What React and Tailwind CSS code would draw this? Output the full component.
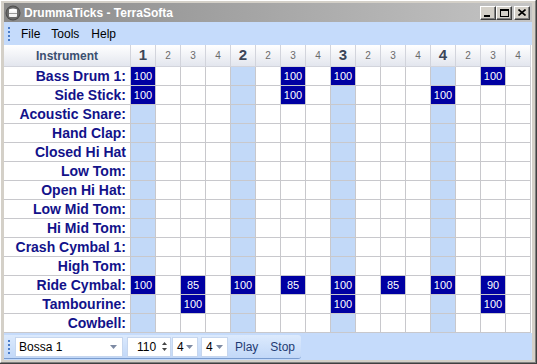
import React from "react";

const rows = [
  ["Bass Drum 1:", { 0: 100, 6: 100, 8: 100, 14: 100 }],
  ["Side Stick:", { 0: 100, 6: 100, 12: 100 }],
  ["Acoustic Snare:", {}],
  ["Hand Clap:", {}],
  ["Closed Hi Hat", {}],
  ["Low Tom:", {}],
  ["Open Hi Hat:", {}],
  ["Low Mid Tom:", {}],
  ["Hi Mid Tom:", {}],
  ["Crash Cymbal 1:", {}],
  ["High Tom:", {}],
  ["Ride Cymbal:", { 0: 100, 2: 85, 4: 100, 6: 85, 8: 100, 10: 85, 12: 100, 14: 90 }],
  ["Tambourine:", { 2: 100, 8: 100, 14: 100 }],
  ["Cowbell:", {}],
];

const cols = Array.from({ length: 16 }, (_, i) => i);

function Grip({ className }) {
  return (
    <div className={"flex flex-col gap-[2px] " + className}>
      {[0, 1, 2, 3].map((i) => (
        <div key={i} className="w-[2px] h-[2px] bg-[#4a7cc8]" />
      ))}
    </div>
  );
}

function Arrow() {
  return (
    <svg width="7" height="4" viewBox="0 0 7 4">
      <path d="M0 0 L7 0 L3.5 4 Z" fill="#7d8aa3" />
    </svg>
  );
}

function WinBtn({ children }) {
  return (
    <div className="w-[16px] h-[14px] bg-[#d4d0c8] border-t border-l border-t-white border-l-white border-r border-b border-r-[#404040] border-b-[#404040] flex items-center justify-center shadow-[inset_-1px_-1px_0_#808080]">
      {children}
    </div>
  );
}

export default function App() {
  return (
    <div
      className="w-[537px] h-[364px] bg-[#d4d0c8] flex flex-col border-r border-b border-r-[#404040] border-b-[#404040] overflow-hidden"
      style={{ fontFamily: '"Liberation Sans", Arial, sans-serif' }}
    >
      <div className="flex-1 flex flex-col border-t border-l border-t-white border-l-white border-r border-b border-r-[#808080] border-b-[#808080] pt-[2px] pl-[3px] pr-[3px] pb-[2px] min-h-0">
        {/* Title bar */}
        <div className="h-[19px] shrink-0 flex items-center bg-gradient-to-r from-[#8a8a8a] to-[#c4c4c4] pl-[1px] pr-[2px]">
          <svg width="16" height="16" viewBox="0 0 16 16" className="mr-[3px]">
            <circle cx="8" cy="8" r="7.5" fill="#4e4e4e" />
            <circle cx="8" cy="8" r="6.5" fill="#6a6a6a" />
            <rect x="4" y="5" width="8" height="7" rx="1" fill="#f4f4f4" />
            <ellipse cx="8" cy="5" rx="4" ry="1.5" fill="#ffffff" />
            <rect x="4" y="8" width="8" height="1" fill="#9a9a9a" />
          </svg>
          <span className="text-white font-bold text-[12px] leading-none">
            DrummaTicks - TerraSofta
          </span>
          <div className="ml-auto flex items-center">
            <WinBtn>
              <div className="w-[6px] h-[2px] bg-black mt-[6px] -ml-[2px]" />
            </WinBtn>
            <WinBtn>
              <div className="w-[9px] h-[8px] border border-black border-t-2" />
            </WinBtn>
            <div className="w-[2px]" />
            <WinBtn>
              <svg width="8" height="7" viewBox="0 0 8 7">
                <path d="M0.5 0.5 L7.5 6.5 M7.5 0.5 L0.5 6.5" stroke="black" strokeWidth="1.6" />
              </svg>
            </WinBtn>
          </div>
        </div>

        {/* Client */}
        <div className="flex-1 flex flex-col bg-[#c5dbfb] min-h-0">
          {/* Menu */}
          <div className="h-[23px] shrink-0 flex items-center bg-[#c5dbfb] text-[12px] text-black">
            <Grip className="ml-[4px] mr-[6px]" />
            <span className="px-[5px]">File</span>
            <span className="px-[5px] ml-[1px]">Tools</span>
            <span className="px-[5px] ml-[2px]">Help</span>
          </div>

          {/* Grid */}
          <div className="bg-white flex-1 min-h-0">
            <div className="grid grid-cols-[127px_repeat(16,25px)] grid-rows-[22px_repeat(14,19px)]">
              <div className="bg-gradient-to-b from-white to-[#e3e6ee] border-r border-b border-[#d2d4dc] flex items-center justify-center text-[12px] font-bold text-[#3b4f70]">
                Instrument
              </div>
              {cols.map((c) => {
                const beat = c % 4 === 0;
                return (
                  <div
                    key={"h" + c}
                    className="bg-gradient-to-b from-white to-[#e3e6ee] border-r border-b border-[#d2d4dc] flex items-center justify-center"
                  >
                    {beat ? (
                      <span className="text-[15px] font-bold text-[#3c4658]">{c / 4 + 1}</span>
                    ) : (
                      <span className="text-[10px] text-[#6a6a6a]">{(c % 4) + 1}</span>
                    )}
                  </div>
                );
              })}
              {rows.map(([name, vals], r) => (
                <React.Fragment key={r}>
                  <div className="border-r border-b border-[#c8c8cc] flex items-center justify-end pr-[4px] overflow-hidden whitespace-nowrap text-[14px] font-bold text-[#12128a] leading-none">
                    {name}
                  </div>
                  {cols.map((c) => {
                    const v = vals[c];
                    const beat = c % 4 === 0;
                    return (
                      <div
                        key={c}
                        className={
                          "border-r border-b border-[#c8c8cc] " +
                          (beat ? "bg-[#c2d9f8]" : "bg-white")
                        }
                      >
                        {v !== undefined && (
                          <div className="h-full w-full bg-[#0000a2] text-white text-[11px] flex items-center justify-center">
                            {v}
                          </div>
                        )}
                      </div>
                    );
                  })}
                </React.Fragment>
              ))}
            </div>
          </div>

          {/* Toolbar */}
          <div className="h-[27px] shrink-0 bg-[#c5dbfb] flex items-start pt-[2px]">
            <div className="h-[24px] flex items-center pl-[4px] pr-[6px] bg-gradient-to-b from-[#dceafd] to-[#c2d8f8] border-b border-[#7a9ccf] rounded-r-[3px] text-[12px]">
              <Grip className="mr-[5px]" />
              <div className="w-[108px] h-[20px] bg-white border border-[#c6d6ee] flex items-center pl-[3px] pr-[5px]">
                <span className="text-black">Bossa 1</span>
                <span className="ml-auto"><Arrow /></span>
              </div>
              <div className="w-[44px] h-[20px] bg-white border border-[#c6d6ee] flex items-center ml-[4px] pl-[9px] pr-[3px]">
                <span className="text-black">110</span>
                <div className="ml-auto flex flex-col items-center gap-[3px]">
                  <svg width="5" height="3" viewBox="0 0 5 3"><path d="M0 3 L2.5 0 L5 3 Z" fill="#444" /></svg>
                  <svg width="5" height="3" viewBox="0 0 5 3"><path d="M0 0 L2.5 3 L5 0 Z" fill="#444" /></svg>
                </div>
              </div>
              <div className="w-[26px] h-[20px] bg-white border border-[#c6d6ee] flex items-center ml-[1px] pl-[4px] pr-[4px]">
                <span className="text-black">4</span>
                <span className="ml-auto"><Arrow /></span>
              </div>
              <div className="w-[27px] h-[20px] bg-white border border-[#c6d6ee] flex items-center ml-[3px] pl-[4px] pr-[4px]">
                <span className="text-black">4</span>
                <span className="ml-auto"><Arrow /></span>
              </div>
              <span className="ml-[7px] text-[#1f3b73]">Play</span>
              <span className="ml-[12px] text-[#1f3b73]">Stop</span>
            </div>
          </div>
        </div>
      </div>
    </div>
  );
}
